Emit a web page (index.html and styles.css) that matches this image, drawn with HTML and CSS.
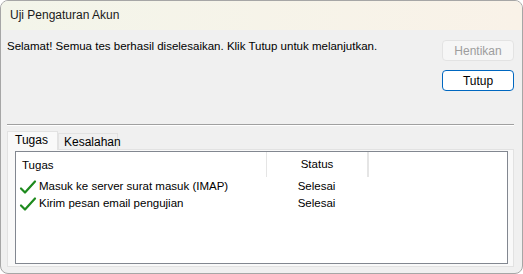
FILE: index.html
```html
<!DOCTYPE html>
<html lang="id">
<head>
  <meta charset="UTF-8">
  <title>Uji Pengaturan Akun</title>
  <link rel="stylesheet" href="styles.css">
</head>
<body>
  <div class="window">
    <div class="titlebar">Uji Pengaturan Akun</div>

    <div class="content">
      <div class="top-row">
        <p class="message">Selamat! Semua tes berhasil diselesaikan. Klik Tutup untuk melanjutkan.</p>
        <div class="buttons">
          <button class="btn" disabled>Hentikan</button>
          <button class="btn btn-default">Tutup</button>
        </div>
      </div>

      <div class="separator"></div>

      <div class="tabs">
        <div class="tab active">Tugas</div>
        <div class="tab">Kesalahan</div>
      </div>

      <div class="tab-panel">
        <div class="listview">
          <div class="list-header">
            <div class="col col-task">Tugas</div>
            <div class="col col-status">Status</div>
            <div class="col col-rest"></div>
          </div>
          <div class="list-row">
            <div class="col col-task">
              <svg class="check" viewBox="0 0 18 16" width="18" height="16">
                <path d="M2 9.5 L6 13.5 L16 2.5" fill="none" stroke="#1e8a1e" stroke-width="2.2" stroke-linecap="round" stroke-linejoin="round"/>
              </svg>
              Masuk ke server surat masuk (IMAP)
            </div>
            <div class="col col-status">Selesai</div>
          </div>
          <div class="list-row">
            <div class="col col-task">
              <svg class="check" viewBox="0 0 18 16" width="18" height="16">
                <path d="M2 9.5 L6 13.5 L16 2.5" fill="none" stroke="#1e8a1e" stroke-width="2.2" stroke-linecap="round" stroke-linejoin="round"/>
              </svg>
              Kirim pesan email pengujian
            </div>
            <div class="col col-status">Selesai</div>
          </div>
        </div>
      </div>
    </div>
  </div>
</body>
</html>
```

FILE: styles.css
```css
/* Dialog window */
body {
  margin: 0;
  font-family: 'Liberation Sans', Arial, sans-serif;
  font-size: 11.5px;
  color: #000;
  background: #fff;
}

.window {
  width: 523px;
  height: 274px;
  box-sizing: border-box;
  border: 1px solid #a6a6a6;
  border-radius: 8px;
  background: #f0f0f0;
  overflow: hidden;
}

.titlebar {
  height: 29px;
  line-height: 29px;
  padding-left: 9px;
  background: linear-gradient(to right, #f3f5ea, #f9f2e8);
  font-size: 12px;
  color: #1a1a1a;
}

.content {
  padding: 0 8px 0 6px;
}

/* Message + buttons */
.top-row {
  display: flex;
  justify-content: space-between;
  height: 94px;
}

.message {
  margin: 9px 0 0;
  line-height: 14px;
}

.buttons {
  display: flex;
  flex-direction: column;
  gap: 9px;
  padding-top: 10px;
}

.btn {
  width: 72px;
  height: 21px;
  box-sizing: border-box;
  font-family: inherit;
  font-size: 12px;
  border-radius: 4px;
  border: 1px solid #e3e3e3;
  background: #f6f6f6;
  color: #9d9d9d;
  padding: 0;
}

.btn-default {
  border-color: #0067c0;
  background: #fff;
  color: #000;
}

.separator {
  height: 1px;
  background: #a0a0a0;
  border-bottom: 1px solid #fff;
  margin-bottom: 5px;
}

/* Tabs */
.tabs {
  display: flex;
  align-items: flex-end;
  height: 18px;
  font-size: 12px;
}

.tab {
  height: 16px;
  line-height: 16px;
  padding: 0 5px;
  border: 1px solid #e2e2e2;
  border-bottom: none;
  background: #f0f0f0;
  box-sizing: border-box;
  width: 60px;
}

.tab.active {
  width: 51px;
  height: 19px;
  padding-left: 7px;
  background: #f9f9f9;
  position: relative;
  z-index: 1;
  margin-bottom: -1px;
}

.tab-panel {
  height: 118px;
  box-sizing: border-box;
  border: 1px solid #e2e2e2;
  background: #f9f9f9;
  padding: 1px 5px 3px 7px;
}

/* List view */
.listview {
  height: 113px;
  box-sizing: border-box;
  border: 1px solid #828790;
  background: #fff;
}

.list-header {
  display: flex;
  height: 25px;
  line-height: 24px;
  margin-bottom: 1px;
}

.list-header .col {
  border-right: 1px solid #e5e5e5;
}

.list-header .col-rest {
  width: 0;
}

.col-task {
  width: 244px;
  padding-left: 6px;
  display: flex;
  align-items: center;
}

.col-status {
  width: 100px;
  text-align: center;
}

.list-row {
  display: flex;
  height: 17px;
  line-height: 17px;
}

.list-row .col-task {
  padding-left: 3px;
  width: 247px;
}

.list-row .col-status {
  width: 101px;
}

.check {
  margin-right: 2px;
}
```
